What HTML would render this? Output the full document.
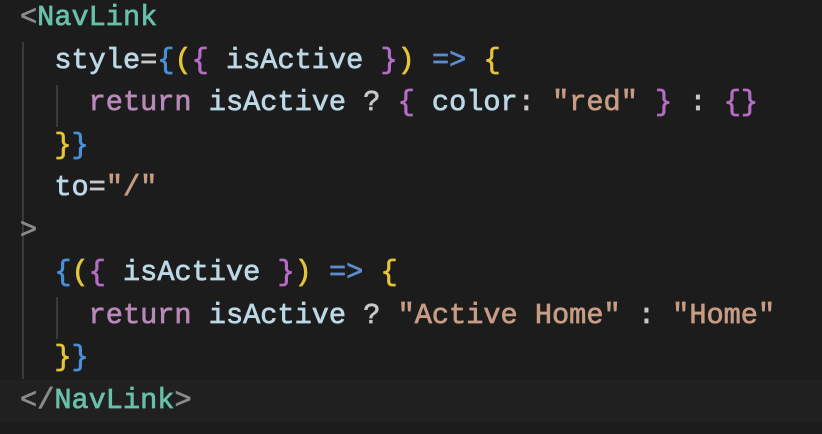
<!DOCTYPE html>
<html><head><meta charset="utf-8"><style>
html,body{margin:0;padding:0;background:#1c1c1c;width:822px;height:434px;overflow:hidden;position:relative}
.code{position:absolute;left:20px;top:-3px;font-family:"Liberation Mono",monospace;font-size:28.6px;line-height:42.5px;color:#bcd8e6;white-space:pre;-webkit-text-stroke:0.7px currentColor}
.g{color:#8a8a8a}.t{color:#68c0a8}.a{color:#bcd8e6}.b{color:#4b8fd6}.y{color:#e3c43a}.p{color:#b46cc4}.k{color:#b888b8}.s{color:#c69c84}.o{color:#c8c8c8}.ar{color:#5c8ccc}
.guide{position:absolute;width:2px;background:#3a3a3a}
.hl{position:absolute;left:0;top:380px;width:822px;height:42px;background:#202020}
</style></head><body>
<div class="hl"></div>
<div class="guide" style="left:22px;top:42px;height:337px"></div>
<div class="guide" style="left:56px;top:85px;height:42px"></div>
<div class="guide" style="left:56px;top:297px;height:42px"></div>
<div class="code"><span class="g">&lt;</span><span class="t">NavLink</span>
  <span class="a">style</span><span class="o">=</span><span class="b">{</span><span class="y">(</span><span class="p">{</span> <span class="a">isActive</span> <span class="p">}</span><span class="y">)</span> <span class="ar">=&gt;</span> <span class="y">{</span>
    <span class="k">return</span> <span class="a">isActive</span> <span class="o">?</span> <span class="p">{</span> <span class="a">color</span><span class="o">:</span> <span class="s">"red"</span> <span class="p">}</span> <span class="o">:</span> <span class="p">{}</span>
  <span class="y">}</span><span class="b">}</span>
  <span class="a">to</span><span class="o">=</span><span class="s">"/"</span>
<span class="g">&gt;</span>
  <span class="b">{</span><span class="y">(</span><span class="p">{</span> <span class="a">isActive</span> <span class="p">}</span><span class="y">)</span> <span class="ar">=&gt;</span> <span class="y">{</span>
    <span class="k">return</span> <span class="a">isActive</span> <span class="o">?</span> <span class="s">"Active Home"</span> <span class="o">:</span> <span class="s">"Home"</span>
  <span class="y">}</span><span class="b">}</span>
<span class="g">&lt;/</span><span class="t">NavLink</span><span class="g">&gt;</span></div>
</body></html>
